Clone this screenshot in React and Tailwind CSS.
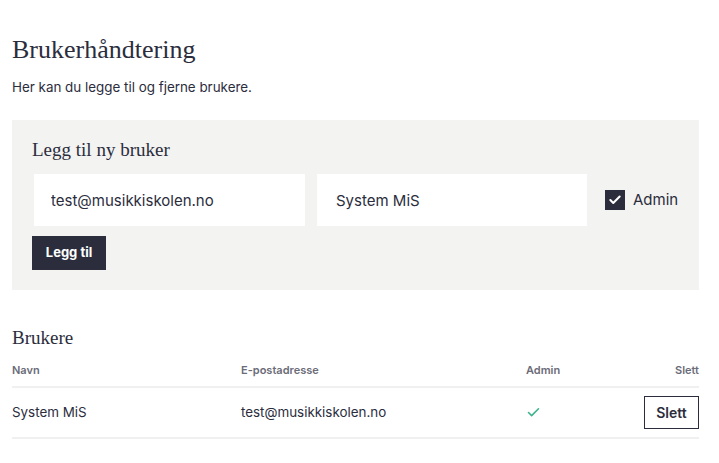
import { Check } from 'lucide-react'

const serif = { fontFamily: '"Liberation Serif", "DejaVu Serif", serif' }

export default function App() {
  const users = [{ name: 'System MiS', email: 'test@musikkiskolen.no', admin: true }]

  return (
    <div className="min-h-screen bg-white pl-3 pr-5 pt-[30px] text-[#2b2d3d]" style={{ fontFamily: 'Inter, "Liberation Sans", sans-serif' }}>
      <h1 className="text-[26px] leading-[40px] text-[#2b2d3d]" style={serif}>Brukerhåndtering</h1>
      <p className="mt-[8px] text-[13.4px] leading-[18px]">Her kan du legge til og fjerne brukere.</p>

      <div className="mt-[24px] bg-[#f3f3f1] pl-[20px] pr-[19px] pt-[16px] pb-[20px]">
        <h2 className="text-[19px] leading-[28px]" style={serif}>Legg til ny bruker</h2>
        <div className="mt-[10px] flex items-center">
          <input
            className="ml-[2px] h-[52px] w-[271px] bg-white px-[17px] text-[15px] text-[#2b2d3d] outline-none"
            defaultValue="test@musikkiskolen.no"
          />
          <input
            className="ml-[12px] h-[52px] w-[270px] bg-white px-[19px] text-[15px] text-[#2b2d3d] outline-none"
            defaultValue="System MiS"
          />
          <label className="ml-[18px] flex items-center gap-[8px] text-[15px]">
            <span className="flex h-[20px] w-[20px] items-center justify-center bg-[#2b2d3d]">
              <Check className="h-[14px] w-[14px] text-white" strokeWidth={3.5} />
            </span>
            Admin
          </label>
        </div>
        <button className="mt-[10px] h-[34px] w-[74px] bg-[#2b2d3d] text-[13px] font-bold text-white">Legg til</button>
      </div>

      <h2 className="mt-[34px] text-[19px] leading-[28px]" style={serif}>Brukere</h2>
      <table className="mt-[8px] w-full text-left">
        <thead>
          <tr className="border-b-2 border-[#f0f0f0] text-[11px] font-semibold text-[#6b6c78]">
            <th className="h-[27px] w-[229px] pb-[6px] font-semibold">Navn</th>
            <th className="w-[285px] pb-[6px] font-semibold">E-postadresse</th>
            <th className="pb-[6px] font-semibold">Admin</th>
            <th className="pb-[6px] text-right font-semibold">Slett</th>
          </tr>
        </thead>
        <tbody>
          {users.map((u) => (
            <tr key={u.email} className="border-b-2 border-[#f0f0f0] text-[13.4px]">
              <td className="h-[51px]">{u.name}</td>
              <td>{u.email}</td>
              <td>{u.admin && <Check className="h-[15px] w-[15px] text-[#3cb38a]" strokeWidth={2.5} />}</td>
              <td className="text-right">
                <button className="h-[33px] w-[55px] border-[1.5px] border-[#2b2d3d] text-[14px] font-semibold">Slett</button>
              </td>
            </tr>
          ))}
        </tbody>
      </table>
    </div>
  )
}
